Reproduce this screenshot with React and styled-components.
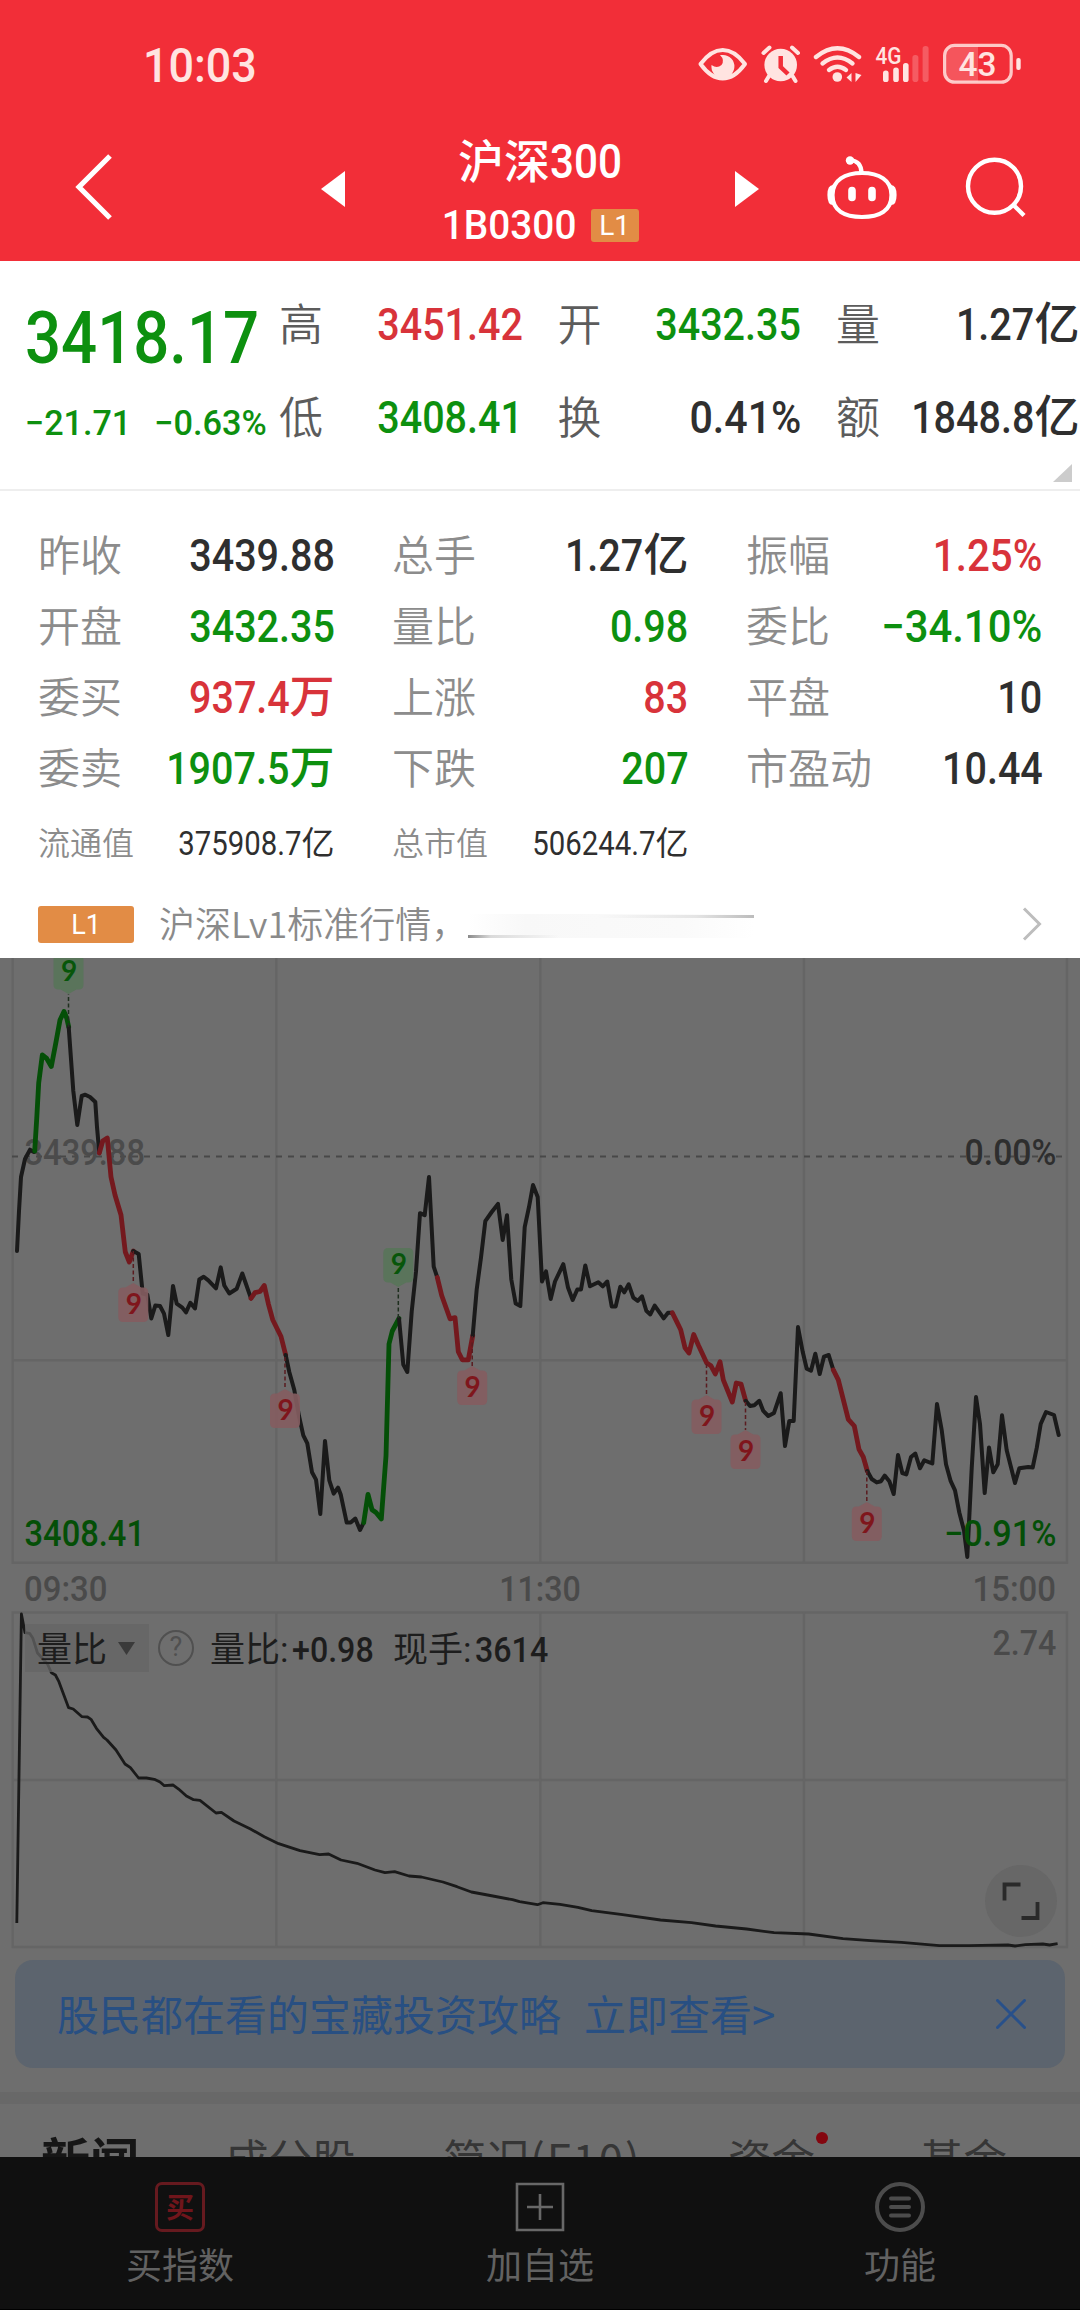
import React from "react";
import styled, { createGlobalStyle } from "styled-components";

const UP = "#d8333a";
const DOWN = "#0d900f";
const DARK = "#2f2f2f";

const headline = [
  { label: "高", value: "3451.42", color: UP },
  { label: "开", value: "3432.35", color: DOWN },
  { label: "量", value: "1.27", unit: "亿" },
  { label: "低", value: "3408.41", color: DOWN },
  { label: "换", value: "0.41%", scale: 0.915 },
  { label: "额", value: "1848.8", unit: "亿" },
];

const details = [
  { label: "昨收", value: "3439.88" },
  { label: "总手", value: "1.27", unit: "亿" },
  { label: "振幅", value: "1.25%", color: UP, scale: 0.895 },
  { label: "开盘", value: "3432.35", color: DOWN },
  { label: "量比", value: "0.98", color: DOWN },
  { label: "委比", value: "−34.10%", color: DOWN, scale: 0.93 },
  { label: "委买", value: "937.4", unit: "万", color: UP },
  { label: "上涨", value: "83", color: UP },
  { label: "平盘", value: "10" },
  { label: "委卖", value: "1907.5", unit: "万", color: DOWN },
  { label: "下跌", value: "207", color: DOWN },
  { label: "市盈动", value: "10.44" },
];

const totals = [
  { label: "流通值", value: "375908.7", unit: "亿", scale: 0.89 },
  { label: "总市值", value: "506244.7", unit: "亿", scale: 0.89 },
];

const LINE = "#1a1a1a";
const LINE_RED = "#74191e";
const LINE_GREEN = "#044f07";

const segments = [
  { color: LINE, points: "17,1251 19,1211 21,1177 25,1159 30,1149.7 34,1152" },
  {
    color: LINE_GREEN,
    points:
      "34.7,1151 36.7,1119 38.7,1083 42.3,1055 46.7,1058.5 51.3,1066.5 56,1042 60,1020 64,1011.5 66.7,1018 68.7,1027",
  },
  {
    color: LINE,
    points: "68.7,1027 73.3,1091 77.3,1125 81.7,1096 85.3,1094.7 90,1097 95.3,1102 97,1127 99.3,1153",
  },
  {
    color: LINE_RED,
    points: "99.3,1153 102.7,1141 107.3,1138 111,1177 115,1195 121,1215 123.3,1235 125.3,1252 129.3,1262 133.3,1251",
  },
  {
    color: LINE,
    points:
      "133.3,1251 138.7,1254 142.7,1293.5 147.3,1294.7 151.3,1318.5 155.3,1305.6 160,1306 164,1313.6 168.3,1335 173,1286 176.7,1303.6 182.3,1307.6 186,1312.4 190.3,1302.8 195,1308.4 199.3,1279.5 203.7,1276.7 208.3,1280.3 216,1288.3 220.7,1267.4 224.3,1285.5 229.3,1293.5 236.7,1288.7 242.3,1273.5 251,1298.4",
  },
  {
    color: LINE_RED,
    points: "251,1298.4 255,1292.7 260,1291.5 264.3,1285.5 268.3,1303.6 272.7,1319.7 281,1336.5 285.7,1355",
  },
  {
    color: LINE,
    points:
      "285.7,1355 289.3,1372 294.3,1390 299,1416 303.3,1435.4 307.3,1443.4 312,1472.3 316,1479.6 320.3,1514 325,1441 329.3,1480.4 333.7,1493.6 338,1487.6 340.7,1494.4 346.7,1522.6 350.7,1522.6 355.3,1518.6 360,1530 363.7,1522.6",
  },
  {
    color: LINE_GREEN,
    points: "363.7,1522.6 368,1494.4 372,1509.7 376,1512.5 381.3,1519 386,1456 389,1344 392.3,1331 399,1318.4",
  },
  {
    color: LINE,
    points:
      "399,1318.4 403.3,1364.6 407.3,1372 411.7,1311.6 416,1271.4 420,1213.2 424.7,1215.2 429,1177 433.7,1266.6 437.3,1277.5",
  },
  {
    color: LINE_RED,
    points: "437.3,1277.5 441.7,1295.5 450,1318.8 455,1317.6 458.3,1351.8 462.3,1359.8 468.3,1359.8 472.7,1335.7",
  },
  {
    color: LINE,
    points:
      "472.7,1335.7 476.7,1289.5 481,1257.4 485.3,1221.2 491.7,1212 498,1203.9 502.7,1240 507,1215.2 511.3,1279.5 515.7,1303.6 520.3,1306 524.7,1227.2 529,1207 533,1185 537.7,1197 542,1281.5 546,1271.4 550.7,1299 555,1281.5 563.3,1264.2 568,1287.5 572.7,1300 577.3,1289.5 581,1289.5 585.3,1265.4 590,1286.3 598.3,1282.3 602.7,1286.3 607.3,1281.5 611.7,1306.4 615.7,1306.4 620.3,1286.7 624.3,1292.3 628.7,1284.3 633.3,1297.6 637.7,1300.8 642,1296.3 646.3,1310.8 650.3,1314.4 654.7,1305.6 663.7,1318.4 668,1312.8 672.3,1312.8",
  },
  {
    color: LINE_RED,
    points:
      "672.3,1312.8 676.7,1321.6 680.7,1329.7 685,1347.8 689,1353 693.7,1334.5 698.3,1345 706.7,1363 711,1365.8 715.3,1374 720,1361.8 723.3,1379.9 732.3,1402 736.3,1383 741,1384 745.7,1400.8",
  },
  {
    color: LINE,
    points:
      "745.7,1400.8 750,1406 754.3,1405.2 759.3,1400.8 763.3,1410.9 768.3,1416 774,1412.9 780.7,1393.2 785,1446 789.3,1420.9 793.7,1420.9 798,1327 802.7,1351.8 806.7,1368.7 811,1370.7 815.3,1353.8 819.7,1374 824,1356.6 828.7,1355 833.3,1369.9",
  },
  {
    color: LINE_RED,
    points: "833.3,1369.9 838.3,1379.9 848.3,1419.3 854.3,1426 859,1449.4 863.3,1457 867.3,1471",
  },
  {
    color: LINE,
    points:
      "867.3,1471 871.7,1479 876.7,1482.4 881,1481.2 884.7,1475.6 889.3,1481.2 893.7,1494 898,1455 902.3,1473 906.3,1474.4 911,1457 915.3,1453.5 920,1468.3 924.3,1460.3 932.3,1463.5 937,1404 941.7,1430 946,1464.3 950.7,1481.2 955,1490.4 959.3,1512.5 964,1530.6 967.3,1557 971.7,1468.3 976,1397 980,1424 984.7,1493 989,1447.4 993.3,1472.3 997.7,1464.3 1002,1415.3 1006.7,1450.2 1015,1483 1019.3,1468.3 1028.3,1467 1032.7,1467.5 1036.7,1448.2 1040.7,1424 1046,1412 1054,1415 1058.7,1435",
  },
];

// tip is the pointed end of the flag, from is where it meets the line
const flags = [
  { x: 68.5, tip: 994, from: 1027, down: true },
  { x: 133.3, tip: 1283, from: 1251 },
  { x: 285, tip: 1389, from: 1357 },
  { x: 398.3, tip: 1287, from: 1318, down: true },
  { x: 472.2, tip: 1366, from: 1336 },
  { x: 706.5, tip: 1395, from: 1364 },
  { x: 745.5, tip: 1430, from: 1402 },
  { x: 866.8, tip: 1502, from: 1471 },
];

const ratioLine =
  "16.8,1923 21.4,1614 25,1632.7 29.6,1633.3 32.9,1638.3 37.5,1653 47.5,1664 51.4,1672.7 55.4,1675 58.9,1681.7 68.6,1707.7 73.2,1709 82,1716.7 87.5,1717 91,1719.3 96.4,1728.3 103.6,1737.3 107,1740 116,1750 125,1764 130.4,1767.7 138.6,1778 146.4,1778 154.3,1779.3 160,1782 164.3,1785.7 173.2,1785 178.6,1789 186.4,1796 193.6,1799.7 200,1800.3 216,1813 221.4,1812.3 234,1821 250,1828.7 264.3,1836.7 278.6,1843.7 300,1850.7 319.6,1854.7 328.6,1854 341,1860 357,1863.3 375,1870 385,1872.7 394.6,1871.7 409,1876 421.4,1877 442.9,1882 457,1886.7 471.4,1892 492.9,1896 512.5,1899.7 519.6,1901.7 537.5,1904.7 542.9,1902.7 560,1904.3 577.9,1907.3 591.7,1910.7 622.6,1914.7 660.5,1920 691.5,1922.7 715.6,1926 746.6,1929 774,1932.7 808.6,1934 843,1938.7 870.6,1940.7 901.6,1942.3 939.4,1945.7 968.7,1945.7 1008,1945 1015,1946 1025.5,1944.7 1042.8,1944 1049.6,1945 1057.6,1943.7";

const gridX = [276.3, 540.3, 804];

const Flag = ({ x, tip, from, down }) => {
  const s = down ? -1 : 1;
  const body = tip + s * 4.5;
  const end = tip + s * 39;
  const r = 5;
  return (
    <g>
      <line x1={x} x2={x} y1={from} y2={tip} stroke={down ? "#1f2f1f" : "#5a1c20"} strokeWidth="1.5" strokeDasharray="4 2.5" />
      <path
        d={`M${x} ${tip} L${x + 8} ${body} H${x + 15 - r} Q${x + 15} ${body} ${x + 15} ${body + s * r} V${end - s * r} Q${x + 15} ${end} ${x + 15 - r} ${end} H${x - 15 + r} Q${x - 15} ${end} ${x - 15} ${end - s * r} V${body + s * r} Q${x - 15} ${body} ${x - 15 + r} ${body} H${x - 8} Z`}
        fill={down ? "#587459" : "#835c60"}
        fillOpacity="0.92"
      />
      <text
        x={x + 0.5}
        y={down ? tip - 13 : tip + 31}
        textAnchor="middle"
        fontFamily="Lato, sans-serif"
        fontWeight="700"
        fontSize="28"
        fill={down ? "#07560a" : "#7f161c"}
      >
        9
      </text>
    </g>
  );
};

const Stat = ({ item, small, strong }) => (
  <StatRow>
    <StatLabel $small={small} $strong={strong}>{item.label}</StatLabel>
    <StatValue $small={small} $color={item.color}>
      <Digits $scale={item.scale || 0.878}>{item.value}</Digits>
      {item.unit}
    </StatValue>
  </StatRow>
);

const StatusIcons = () => (
  <svg width="334" height="44" viewBox="694 42 334 44" fill="none" stroke="#ffe4e1" strokeWidth="4">
    <path d="M700.5 64 Q711 50 722.7 50 Q734.5 50 745 64 Q734.5 78.5 722.7 78.5 Q711 78.5 700.5 64Z" strokeLinejoin="round" />
    <path d="M723 55 A11.5 11.5 0 1 1 711.5 65 Q717 69 721.5 65 Q725 60 720 55Z" fill="#ffe4e1" stroke="none" />
    <g>
      <circle cx="780.7" cy="65" r="16.3" fill="#ffe4e1" stroke="none" />
      <path d="M763.5 53 L769.5 47.5 M798 53 L792 47.5 M769 76 L766 81 M792.5 76 L795.5 81" strokeLinecap="round" />
      <path d="M780.7 56 V67 L788 74" stroke="#f22e38" strokeWidth="4.5" />
    </g>
    <g strokeLinecap="round" strokeWidth="4.4">
      <path d="M816 57 Q837.5 39.5 859 57" />
      <path d="M822.5 63.5 Q837.5 51.5 852.5 63.5" />
      <path d="M829 70 Q837.5 63.5 846 70" />
    </g>
    <circle cx="837.3" cy="77" r="4.8" fill="#ffe4e1" stroke="none" />
    <path d="M846.5 77.5 L851.5 73 V82Z M861.5 75 L855.5 73 V82Z" fill="#ffe4e1" stroke="none" />
    <text x="875.5" y="64" textLength="26" lengthAdjust="spacingAndGlyphs" fontFamily="Roboto" fontWeight="500" fontSize="24" fill="#ffe4e1" stroke="none">
      4G
    </text>
    <g fill="#ffe4e1" stroke="none">
      <rect x="883" y="70.5" width="5.6" height="11.5" rx="2.6" />
      <rect x="893.2" y="67.5" width="5.6" height="14.5" rx="2.6" />
      <rect x="903" y="63" width="5.6" height="19" rx="2.6" />
      <rect x="912.4" y="55" width="6" height="27" rx="2.8" opacity="0.25" />
      <rect x="922.6" y="46" width="6" height="36" rx="2.8" opacity="0.25" />
      <path d="M978 46 H954 Q945 46 945 55 V73 Q945 82 954 82 H978Z" opacity="0.22" />
      <rect x="1016.3" y="58" width="4.4" height="12" rx="2" />
    </g>
    <rect x="944.6" y="45.4" width="66.6" height="36.8" rx="10" strokeWidth="3.2" opacity="0.85" />
    <text x="958.5" y="76" textLength="38" lengthAdjust="spacingAndGlyphs" fontFamily="Roboto" fontWeight="500" fontSize="34" fill="#ffe4e1" stroke="none">
      43
    </text>
  </svg>
);

const RobotIcon = () => (
  <svg width="72" height="66" viewBox="825 154 72 66" fill="none" stroke="#fff" strokeWidth="4.2">
    <path d="M861 173 C878 173 890.5 180 890.5 195 C890.5 211 878 217 861 217 C844 217 831.5 211 831.5 195 C831.5 180 844 173 861 173Z" />
    <path d="M832 187 Q828.5 187 828.5 195 Q828.5 203 832 203 M890 187 Q893.5 187 893.5 195 Q893.5 203 890 203" />
    <path d="M849 160 Q860.5 161 860.5 173" />
    <circle cx="849" cy="160.5" r="4.2" fill="#fff" stroke="none" />
    <path d="M851 190.5 V197.5 M871 190.5 V197.5" strokeWidth="7.6" strokeLinecap="round" />
  </svg>
);

const App = () => {
  return (
    <Screen>
      <GlobalStyle />
      <Header>
        <StatusBar>
          <Clock>
            <Digits $scale={0.935} $origin="left">10:03</Digits>
          </Clock>
          <StatusIcons />
        </StatusBar>
        <NavBar>
          <svg width="38" height="68" viewBox="0 0 38 68" fill="none" stroke="#fff" strokeWidth="5.2">
            <path d="M35 3 L4 34 L35 65" />
          </svg>
          <Arrow $flip width="24" height="36" viewBox="0 0 24 36" fill="#fff">
            <path d="M0 0 L24 18 L0 36Z" />
          </Arrow>
          <TitleBlock>
            <Title>
              沪深<Digits $scale={0.88} $origin="left">300</Digits>
            </Title>
            <Code>
              <Digits $scale={0.945}>1B0300</Digits>
              <TitleBadge>L1</TitleBadge>
            </Code>
          </TitleBlock>
          <Arrow width="24" height="36" viewBox="0 0 24 36" fill="#fff">
            <path d="M0 0 L24 18 L0 36Z" />
          </Arrow>
          <RobotIcon />
          <svg width="62" height="62" viewBox="965 157 62 62" fill="none" stroke="#fff" strokeWidth="4.4">
            <circle cx="994.5" cy="187.3" r="26.5" />
            <path d="M1013.5 206 L1024 216.5" />
          </svg>
        </NavBar>
      </Header>

      <Quote>
        <PriceBlock>
          <Price>
            <Digits $scale={0.882} $origin="left">3418.17</Digits>
          </Price>
          <Change>
            <Digits $scale={0.975} $origin="left">−21.71</Digits>
            <Digits $scale={0.98}>−0.63%</Digits>
          </Change>
        </PriceBlock>
        <HeadlineGrid>
          {headline.map((item) => (
            <Stat key={item.label} item={item} strong />
          ))}
        </HeadlineGrid>
        <Corner width="19" height="18" viewBox="0 0 19 18">
          <path d="M19 0 V18 H0Z" fill="#ccc" />
        </Corner>
      </Quote>

      <DetailPanel>
        <DetailGrid>
          {details.map((item) => (
            <Stat key={item.label} item={item} />
          ))}
        </DetailGrid>
        <TotalGrid>
          {totals.map((item) => (
            <Stat key={item.label} item={item} small />
          ))}
        </TotalGrid>
        <LevelRow>
          <LevelBadge>L1</LevelBadge>
          <LevelText>沪深Lv1标准行情，</LevelText>
          <Smudge />
          <svg width="20" height="34" viewBox="0 0 20 34" fill="none" stroke="#bdbdbd" strokeWidth="3">
            <path d="M2 1.5 L17.5 17 L2 32.5" />
          </svg>
        </LevelRow>
      </DetailPanel>

      <Dimmed>
        <Chart width="1080" height="606" viewBox="0 958 1080 606">
          <g stroke="#656565" strokeWidth="2.4" fill="none">
            <path d="M12.7 958 V1562.7 H1067 V958 M12.7 1360.3 H1067" />
            {gridX.map((x) => (
              <line key={x} x1={x} x2={x} y1="958" y2="1562" />
            ))}
          </g>
          <line x1="12" x2="1062" y1="1156.5" y2="1156.5" stroke="#484848" strokeWidth="2" strokeDasharray="6 6" />
          <g fontFamily="Roboto" fontSize="36" fontWeight="500">
            <text x="24.5" y="1165" textLength="120.5" lengthAdjust="spacingAndGlyphs" fill="#4b4b4b">3439.88</text>
            <text x="964.5" y="1165" textLength="92" lengthAdjust="spacingAndGlyphs" fill="#2e2e2e">0.00%</text>
          </g>
          {segments.map((seg) => (
            <polyline
              key={seg.points}
              points={seg.points}
              fill="none"
              stroke={seg.color}
              strokeWidth={seg.color === LINE ? 4 : 4.8}
              strokeLinejoin="round"
              strokeLinecap="round"
            />
          ))}
          {flags.map((flag) => (
            <Flag key={flag.x} {...flag} />
          ))}
          <g fontFamily="Roboto" fontSize="36" fontWeight="500" fill={LINE_GREEN}>
            <text x="24.5" y="1546" textLength="120.5" lengthAdjust="spacingAndGlyphs">3408.41</text>
            <text x="944" y="1546" textLength="112.5" lengthAdjust="spacingAndGlyphs">−0.91%</text>
          </g>
        </Chart>
        <TimeAxis>
          <Digits $scale={0.94} $origin="left">09:30</Digits>
          <Digits $scale={0.92} $origin="center">11:30</Digits>
          <Digits $scale={0.94}>15:00</Digits>
        </TimeAxis>
        <RatioPanel>
          <Chart width="1080" height="338" viewBox="0 1611 1080 338">
            <path
              d="M12.7 1612.5 H1067 V1947 H12.7Z M12.7 1780 H1067"
              fill="none"
              stroke="#656565"
              strokeWidth="2.4"
            />
            {gridX.map((x) => (
              <line key={x} x1={x} x2={x} y1="1612" y2="1947" stroke="#656565" strokeWidth="2.4" />
            ))}
            <polyline points={ratioLine} fill="none" stroke={LINE} strokeWidth="2.8" strokeLinejoin="round" />
          </Chart>
          <RatioBar>
            <Dropdown>
              <span>量比</span>
              <svg width="17" height="13" viewBox="0 0 17 13">
                <path d="M0 0 H17 L8.5 13Z" fill="#3a3a3a" />
              </svg>
            </Dropdown>
            <Help>?</Help>
            <RatioText $width={183}>量比:<Digits $scale={0.92} $origin="left">+0.98</Digits></RatioText>
            <RatioText>现手:<Digits $scale={0.92} $origin="left">3614</Digits></RatioText>
            <RatioMax>
              <Digits $scale={0.92}>2.74</Digits>
            </RatioMax>
          </RatioBar>
          <Expand>
            <svg width="38" height="38" viewBox="0 0 38 38" fill="none" stroke="#2a2a2a" strokeWidth="3.8">
              <path d="M2.5 18.5 V2.5 H18.5 M35.5 20 V36 H19.5" />
            </svg>
          </Expand>
        </RatioPanel>
        <Banner>
          <span>股民都在看的宝藏投资攻略</span>
          <span>立即查看&gt;</span>
          <svg width="30" height="30" viewBox="0 0 30 30" stroke="#28508a" strokeWidth="3" strokeLinecap="round">
            <path d="M1.5 1.5 L28.5 28.5 M28.5 1.5 L1.5 28.5" />
          </svg>
        </Banner>
        <Tabs>
          <Tab $active $width={184}>新闻</Tab>
          <Tab $width={218}>成分股</Tab>
          <Tab $width={285}>简况<TabCode>(F10)</TabCode></Tab>
          <Tab $width={192} $dot>资金</Tab>
          <Tab>基金</Tab>
        </Tabs>
      </Dimmed>

      <BottomBar>
        <Action>
          <BuyIcon>买</BuyIcon>
          买指数
        </Action>
        <Action>
          <svg width="50" height="50" viewBox="0 0 50 50" fill="none" stroke="#686868" strokeWidth="2.6">
            <path d="M2 2 H48 V48 H2Z M12 25 H38 M25 12 V38" />
          </svg>
          加自选
        </Action>
        <Action>
          <svg width="50" height="50" viewBox="0 0 50 50" fill="none" stroke="#4c4c4c" strokeWidth="4" strokeLinecap="round">
            <circle cx="25" cy="25" r="23" />
            <path d="M16 16.5 H34 M16 25 H34 M16 33.5 H34" />
          </svg>
          功能
        </Action>
      </BottomBar>
    </Screen>
  );
};

export default App;

// Styled Components
const GlobalStyle = createGlobalStyle`
  * {
    box-sizing: border-box;
  }

  body {
    margin: 0;
    font-family: Roboto, "Noto Sans CJK SC", sans-serif;
  }
`;

const Screen = styled.div`
  width: 1080px;
  height: 2310px;
  display: flex;
  flex-direction: column;
  overflow: hidden;
  background: #fff;
`;

const Digits = styled.span`
  display: inline-block;
  white-space: nowrap;
  transform: scaleX(${(p) => p.$scale});
  transform-origin: ${(p) => p.$origin || "right"} center;
`;

const Header = styled.header`
  height: 261px;
  flex: none;
  background: #f22e38;
  color: #fff;
`;

const StatusBar = styled.div`
  height: 130px;
  padding: 0 52px 0 143px;
  display: flex;
  align-items: center;
  justify-content: space-between;

  svg {
    margin-bottom: 2px;
  }
`;

const Clock = styled.div`
  font-size: 48px;
  font-weight: 500;
  color: #ffe4e1;
`;

const NavBar = styled.div`
  height: 131px;
  padding: 0 53px 0 75px;
  display: grid;
  grid-template-columns: 246px 24px 390px 91px 139px 63px;
  grid-template-rows: 113px;
  align-items: center;
`;

const Arrow = styled.svg`
  transform: ${(p) => (p.$flip ? "scaleX(-1)" : "none")};
  margin-top: 4px;
`;

const TitleBlock = styled.div`
  display: flex;
  flex-direction: column;
  align-items: center;
  align-self: start;
`;

const Title = styled.div`
  height: 71px;
  line-height: 64px;
  font-size: 46px;
  font-weight: 500;
  padding-left: 10px;

  ${Digits} {
    font-size: 48px;
  }
`;

const Code = styled.div`
  height: 48px;
  margin-right: 7px;
  display: flex;
  align-items: center;
  gap: 14px;
  font-size: 41px;
  font-weight: 500;
`;

const TitleBadge = styled.span`
  width: 48px;
  height: 33px;
  line-height: 33px;
  border-radius: 3px;
  background: #e28c45;
  font-size: 28px;
  font-weight: 400;
  text-align: center;
`;

const Quote = styled.section`
  position: relative;
  height: 230px;
  flex: none;
  display: flex;
  padding: 17px 1px 0 25px;
  border-bottom: 2px solid #eee;
`;

const PriceBlock = styled.div`
  width: 254px;
  color: ${DOWN};
`;

const Price = styled.div`
  height: 116px;
  line-height: 122px;
  font-size: 72px;
  font-weight: 500;
`;

const Change = styled.div`
  width: 242px;
  height: 60px;
  line-height: 60px;
  font-size: 35px;
  font-weight: 500;
  display: flex;
  justify-content: space-between;
`;

const HeadlineGrid = styled.div`
  flex: 1;
  display: grid;
  grid-template-columns: repeat(3, 242px);
  grid-auto-rows: 93px;
  column-gap: 36.5px;
`;

const Corner = styled.svg`
  position: absolute;
  right: 8px;
  bottom: 7px;
`;

const StatRow = styled.div`
  display: flex;
  align-items: center;
  justify-content: space-between;
`;

const StatLabel = styled.span`
  font-family: "Noto Sans CJK SC", sans-serif;
  font-weight: 350;
  line-height: 1;
  font-size: ${(p) => (p.$small ? 32 : p.$strong ? 44 : 42)}px;
  color: ${(p) => (p.$strong ? "#5c5c5c" : "#8c8c8c")};
  margin-top: -5px;
`;

const StatValue = styled.span`
  font-size: ${(p) => (p.$small ? 33 : 45)}px;
  font-weight: ${(p) => (p.$small ? 400 : 500)};
  line-height: 1;
  color: ${(p) => p.$color || DARK};
  margin-right: -1.5px;
`;

const DetailPanel = styled.section`
  height: 467px;
  flex: none;
  padding: 29px 38px 0;
`;

const DetailGrid = styled.div`
  display: grid;
  grid-template-columns: repeat(3, 295px);
  grid-auto-rows: 71px;
  column-gap: 59px;
`;

const TotalGrid = styled(DetailGrid)`
  grid-auto-rows: 78px;
`;

const LevelRow = styled.div`
  height: 84px;
  display: flex;
  align-items: center;
`;

const LevelBadge = styled.span`
  width: 96px;
  height: 37px;
  line-height: 38px;
  border-radius: 3px;
  background: #e28c45;
  color: #fff;
  font-size: 27px;
  text-align: center;
`;

const LevelText = styled.span`
  width: 309px;
  margin-left: 25px;
  font-family: "Noto Sans CJK SC", sans-serif;
  font-weight: 350;
  font-size: 36px;
  line-height: 1;
  white-space: nowrap;
  color: #8a8a8a;
  margin-top: -4px;
`;

/* leftover streaks of a faded-out link */
const Smudge = styled.span`
  width: 286px;
  height: 24px;
  margin: 4px auto 0 0;
  background:
    linear-gradient(90deg, #8a8a8a, #dadada 8%, transparent 32%) 0 100% / 100% 3px no-repeat,
    linear-gradient(90deg, transparent 45%, #e4e4e4 80%, #bcbcbc) 0 1px / 100% 3px no-repeat,
    linear-gradient(90deg, #fff, #f8f8f8 20%, #fafafa 75%, #fff);
`;

const Dimmed = styled.main`
  height: 1199px;
  flex: none;
  overflow: hidden;
  background: #6e6e6e;
`;

const Chart = styled.svg`
  display: block;
`;

const TimeAxis = styled.div`
  height: 47px;
  padding: 3px 24px 0;
  display: grid;
  grid-template-columns: 1fr 1fr 1fr;
  align-items: center;
  font-size: 35px;
  font-weight: 500;
  color: #4a4a4a;
  line-height: 1;

  ${Digits}:nth-child(2) {
    text-align: center;
  }

  ${Digits}:nth-child(3) {
    text-align: right;
  }
`;

const RatioPanel = styled.div`
  position: relative;
`;

const RatioBar = styled.div`
  position: absolute;
  top: 13px;
  left: 25px;
  right: 24px;
  height: 48px;
  display: flex;
  align-items: center;
  font-size: 35px;
  color: #1d1d1d;
`;

const Dropdown = styled.div`
  width: 124px;
  height: 48px;
  padding: 0 14px 0 12px;
  display: flex;
  align-items: center;
  justify-content: space-between;
  background: rgba(101, 101, 101, 0.75);

  span {
    margin-top: -4px;
  }
`;

const Help = styled.span`
  width: 36px;
  height: 36px;
  margin: 0 16px 0 9px;
  border: 2.5px solid #505050;
  border-radius: 50%;
  font-size: 27px;
  line-height: 31px;
  text-align: center;
  color: #505050;
`;

const RatioText = styled.span`
  width: ${(p) => (p.$width ? `${p.$width}px` : "auto")};
  margin-top: -4px;
  white-space: nowrap;

  ${Digits} {
    margin-left: 4px;
    font-weight: 500;
  }
`;

const RatioMax = styled.span`
  margin: -10px 0 0 auto;
  font-weight: 500;
  color: #4a4a4a;
`;

const Expand = styled.div`
  position: absolute;
  right: 23px;
  bottom: 12px;
  width: 72px;
  height: 72px;
  border-radius: 50%;
  background: #676767;
  display: flex;
  align-items: center;
  justify-content: center;
`;

const Banner = styled.div`
  height: 108px;
  margin: 11px 15px 24px;
  padding: 0 39px 0 42px;
  display: flex;
  align-items: center;
  gap: 23px;
  border-radius: 18px;
  background: #5c646e;
  color: #284f82;
  font-family: "Noto Sans CJK SC", sans-serif;
  font-size: 42px;

  span {
    margin-top: -4px;
  }

  svg {
    margin-left: auto;
  }
`;

const Tabs = styled.div`
  height: 100px;
  padding: 20px 0 0 41px;
  border-top: 12px solid #686868;
  display: flex;
  align-items: center;
`;

const Tab = styled.div`
  position: relative;
  width: ${(p) => p.$width}px;
  white-space: nowrap;
  font-family: "Noto Sans CJK SC", sans-serif;
  font-size: ${(p) => (p.$active ? 49 : 43.5)}px;
  font-weight: ${(p) => (p.$active ? 700 : 400)};
  line-height: 62px;
  color: ${(p) => (p.$active ? "#161616" : "#363636")};

  &::after {
    content: "";
    display: ${(p) => (p.$dot ? "block" : "none")};
    position: absolute;
    left: 88px;
    top: 5px;
    width: 12px;
    height: 12px;
    border-radius: 50%;
    background: #84060f;
  }
`;

const TabCode = styled.span`
  letter-spacing: 2px;
`;

const BottomBar = styled.nav`
  height: 153px;
  flex: none;
  display: grid;
  grid-template-columns: repeat(3, 1fr);
  background: #101010;
  border-bottom: 1px solid #000;
`;

const Action = styled.div`
  padding-top: 25px;
  display: flex;
  flex-direction: column;
  align-items: center;
  gap: 5px;
  font-family: "Noto Sans CJK SC", sans-serif;
  font-size: 36px;
  color: #626262;
`;

const BuyIcon = styled.span`
  width: 50px;
  height: 50px;
  line-height: 42px;
  border: 3px solid #661a1f;
  border-radius: 7px;
  font-size: 28px;
  font-weight: 700;
  text-align: center;
  color: #70151b;
`;
